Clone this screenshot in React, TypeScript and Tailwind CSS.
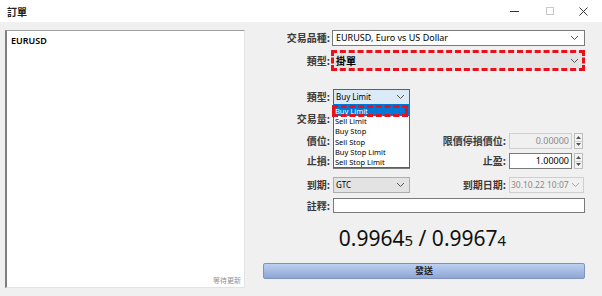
import { ReactNode } from "react";

const latin = "font-['Noto_Sans','Noto_Sans_CJK_TC',sans-serif]";
const cjk = "font-['Noto_Sans_CJK_TC','Noto_Sans',sans-serif]";

const Chevron = ({ color = "#555" }: { color?: string }) => (
  <svg width="9" height="6" viewBox="0 0 9 6" fill="none" className="shrink-0">
    <path d="M1 1L4.5 4.5L8 1" stroke={color} strokeWidth="1" />
  </svg>
);

const Spinner = () => (
  <div className="ml-[2px] flex h-full w-[9px] flex-col border border-[#bdbdbd] bg-[#f4f4f4]">
    <div className="flex flex-1 items-center justify-center border-b border-[#d0d0d0]">
      <svg width="5" height="3" viewBox="0 0 5 3"><path d="M0 3L2.5 0L5 3Z" fill="#555" /></svg>
    </div>
    <div className="flex flex-1 items-center justify-center">
      <svg width="5" height="3" viewBox="0 0 5 3"><path d="M0 0L2.5 3L5 0Z" fill="#555" /></svg>
    </div>
  </div>
);

const Label = ({ children, className = "w-[70px]" }: { children: ReactNode; className?: string }) => (
  <div className={`${className} ${cjk} shrink-0 text-right text-[10px] leading-none font-semibold text-[#3a3a3a]`}>
    {children}:
  </div>
);

const NumInput = ({ value, disabled }: { value: string; disabled?: boolean }) => (
  <div className="flex h-full items-stretch">
    <div
      className={`flex w-[63px] items-center justify-end pr-[2px] text-[9px] ${latin} ${
        disabled ? "border border-[#cfcfcf] bg-[#f0f0f0] text-[#8a8a8a]" : "border border-[#7a7a7a] bg-white text-black"
      }`}
    >
      {value}
    </div>
    <Spinner />
  </div>
);

const options = ["Buy Limit", "Sell Limit", "Buy Stop", "Sell Stop", "Buy Stop Limit", "Sell Stop Limit"];

export default function App() {
  return (
    <div className="flex h-[296px] w-[602px] flex-col overflow-hidden bg-[#f0f0f0] select-none">
      {/* title bar */}
      <div className="flex h-[22px] shrink-0 items-center bg-white">
        <div className={`${cjk} pl-[7px] text-[10px] font-semibold text-[#222]`}>訂單</div>
        <div className="ml-auto flex items-center">
          <div className="flex w-[35px] justify-center">
            <div className="h-px w-[9px] bg-[#333]" />
          </div>
          <div className="flex w-[35px] justify-center">
            <div className="h-[8px] w-[8px] border border-[#c8c8c8]" />
          </div>
          <div className="flex w-[35px] justify-center pr-[2px]">
            <svg width="9" height="9" viewBox="0 0 9 9"><path d="M0.5 0.5L8.5 8.5M8.5 0.5L0.5 8.5" stroke="#333" strokeWidth="1" /></svg>
          </div>
        </div>
      </div>

      <div className="flex flex-1">
        {/* symbol panel */}
        <div className="ml-[5px] mt-[8px] mb-[8px] flex w-[240px] flex-col border-t border-l-2 border-t-[#a0a0a0] border-l-[#808080] border-r border-b border-r-[#e3e3e3] border-b-[#e3e3e3] bg-white">
          <div className={`${latin} pl-[4px] pt-[5px] text-[9px] leading-none font-semibold text-black`}>EURUSD</div>
          <div className={`${cjk} mt-auto pr-[3px] pb-[2px] text-right text-[7px] text-[#909090]`}>等待更新</div>
        </div>

        {/* order form */}
        <div className="ml-[15px] flex w-[325px] flex-col pt-[8px]">
          <div className="flex h-[16px] items-center">
            <Label>交易品種</Label>
            <div className={`ml-[2px] flex h-full flex-1 items-center justify-between border border-[#7a7a7a] bg-white pl-[3px] pr-[5px] text-[9px] text-black ${latin}`}>
              EURUSD, Euro vs US Dollar
              <Chevron />
            </div>
          </div>

          <div className="mt-[4px] flex h-[21px] items-center">
            <Label>類型</Label>
            <div className="ml-[1px] flex h-full flex-1 items-center justify-between border-[3px] border-dashed border-[#e8101a] bg-[#e3e3e3] pl-[2px] pr-[3px]">
              <span className={`${cjk} text-[10px] font-semibold text-black`}>掛單</span>
              <Chevron />
            </div>
          </div>

          <div className="mt-[18px] flex h-[16px] items-center">
            <Label>類型</Label>
            <div className="relative ml-[3px] h-full w-[77px]">
              <div className={`flex h-full items-center justify-between border border-[#0078d7] bg-[#dbeaf7] pl-[2px] pr-[4px] text-[8px] text-black ${latin}`}>
                Buy Limit
                <Chevron />
              </div>
              <div className="absolute top-full left-0 z-10 flex h-[63px] w-[77px] flex-col border border-[#0078d7] bg-white">
                {options.map((o, i) => (
                  <div
                    key={o}
                    className={`flex h-[10.3px] items-center pl-[1px] text-[7.5px] leading-[10px] whitespace-nowrap ${latin} ${
                      i === 0 ? "bg-[#0078d7] text-white" : "text-black"
                    }`}
                  >
                    {o}
                  </div>
                ))}
                <div className="absolute top-[-1px] left-[-2px] h-[12px] w-[76px] border-[3px] border-dashed border-[#e8101a]" />
              </div>
            </div>
          </div>

          <div className="mt-[6px] flex h-[16px] items-center">
            <Label>交易量</Label>
            <div className="ml-[3px] h-full w-[77px] border border-[#7a7a7a] bg-white" />
          </div>

          <div className="mt-[6px] flex h-[16px] items-center">
            <Label>價位</Label>
            <div className="ml-[3px] h-full w-[77px] border border-[#7a7a7a] bg-white" />
            <Label className="w-[96px]">限價停損價位</Label>
            <div className="ml-[3px] h-full">
              <NumInput value="0.00000" disabled />
            </div>
          </div>

          <div className="mt-[4px] flex h-[16px] items-center">
            <Label>止損</Label>
            <div className="ml-[3px] h-full w-[77px] border border-[#7a7a7a] bg-white" />
            <Label className="w-[96px]">止盈</Label>
            <div className="ml-[3px] h-full">
              <NumInput value="1.00000" />
            </div>
          </div>

          <div className="mt-[8px] flex h-[16px] items-center">
            <Label>到期</Label>
            <div className={`ml-[3px] flex h-full w-[77px] items-center justify-between border border-[#adadad] bg-[#e3e3e3] pl-[2px] pr-[4px] text-[8px] text-black ${latin}`}>
              GTC
              <Chevron />
            </div>
            <Label className="w-[96px]">到期日期</Label>
            <div className={`ml-[3px] flex h-full w-[75px] items-center justify-between border border-[#cfcfcf] bg-[#f0f0f0] pl-[1px] pr-[3px] text-[8.5px] whitespace-nowrap text-[#8a8a8a] ${latin}`}>
              30.10.22 10:07
              <Chevron color="#aaa" />
            </div>
          </div>

          <div className="mt-[5px] flex h-[15px] items-center">
            <Label>註釋</Label>
            <div className="ml-[3px] h-full flex-1 border border-[#7a7a7a] bg-white" />
          </div>

          <div className={`mt-[12px] h-[26px] text-center text-[21px] leading-[26px] text-[#111] ${latin}`}>
            <span>
              0.9964<span className="text-[15px]">5</span> / 0.9967<span className="text-[15px]">4</span>
            </span>
          </div>

          <div className="mt-[12px] ml-[3px] flex h-[16px] items-center justify-center rounded-[2px] border border-[#7f93bd] bg-gradient-to-b from-[#bcd0f0] to-[#8ea6d4]">
            <span className={`${cjk} text-[9px] font-semibold text-[#222]`}>發送</span>
          </div>
        </div>
      </div>
    </div>
  );
}
